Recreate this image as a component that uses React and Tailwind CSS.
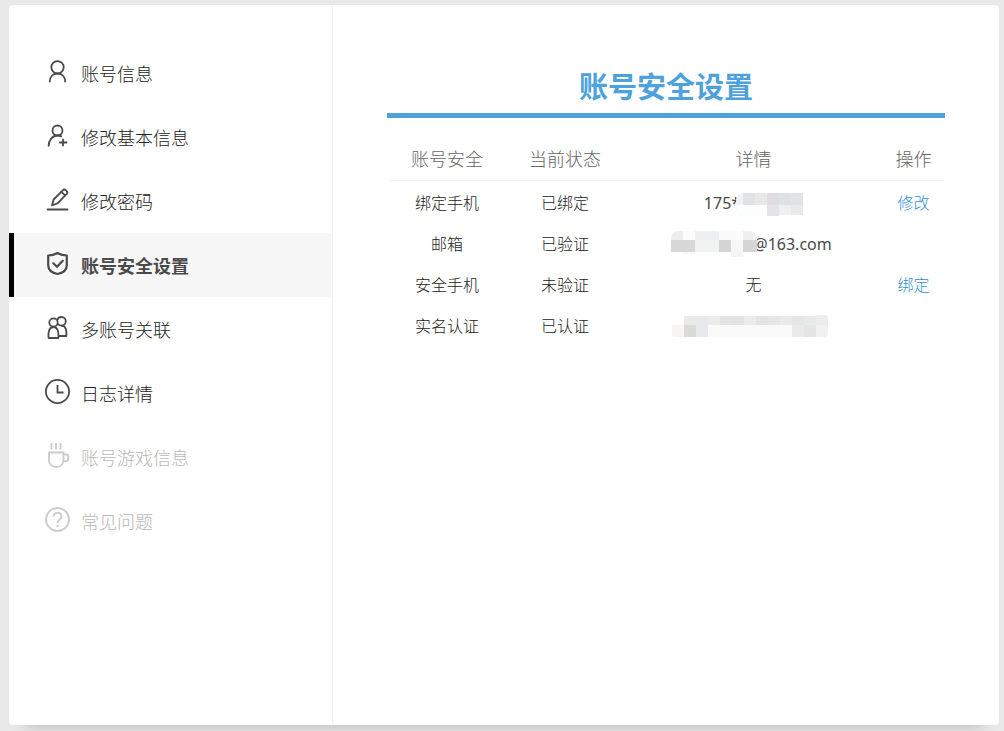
const UserIcon = () => (
  <svg width="26" height="26" viewBox="0 0 26 26" fill="none" stroke="currentColor" strokeWidth="1.8" strokeLinecap="round">
    <circle cx="12.500" cy="8.300" r="6.2" />
    <path d="M4.800 22.500c.2-5 3.500-8 7.700-8s7.500 3 7.700 8" />
  </svg>
);

const UserAddIcon = () => (
  <svg width="26" height="26" viewBox="0 0 26 26" fill="none" stroke="currentColor" strokeWidth="1.8" strokeLinecap="round">
    <circle cx="12.500" cy="7.500" r="5" />
    <path d="M3.600 22.800c.2-5.500 3.500-10.300 9-10.300 1.200 0 2.500.2 3.700.9" />
    <path d="M18 16.500v6M14.800 19.500h6.700" />
  </svg>
);

const EditIcon = () => (
  <svg width="26" height="26" viewBox="0 0 26 26" fill="none" stroke="currentColor" strokeWidth="1.8" strokeLinecap="round" strokeLinejoin="round">
    <path d="M7 18.500l1.600-6L17.800 3.300c.8-.9 1.900-1 2.700-.3l1.200 1.100c.8.8.8 1.800 0 2.700L12.800 16.200z" />
    <path d="M16.300 4.800l3.800 3.600" />
    <path d="M2.500 22.500h20" />
  </svg>
);

const ShieldIcon = () => (
  <svg width="26" height="26" viewBox="0 0 26 26" fill="none" stroke="currentColor" strokeWidth="2.2" strokeLinecap="round" strokeLinejoin="round">
    <path d="M12.500 2c2.800 1.700 5.500 2.500 9.300 2.500v9.500c0 5-4.300 8-9.300 9-5-1-9.300-4-9.300-9V4.500c3.800 0 6.500-.8 9.300-2.500z" />
    <path d="M8.300 12.300l3.700 3.500 5.800-6" />
  </svg>
);

const GroupIcon = () => (
  <svg width="26" height="26" viewBox="0 0 26 26" fill="none" stroke="currentColor" strokeWidth="1.8" strokeLinecap="round" strokeLinejoin="round">
    <circle cx="8.500" cy="7.500" r="4.200" />
    <path d="M3.600 23c-.6-6 .4-11 4.900-11s5.200 5.200 4.900 11z" />
    <path d="M12.300 4.800c.7-1.800 2.300-2.800 4.100-2.800 2.500 0 4.400 1.900 4.400 4.300s-1.900 4.300-4.400 4.300c-1.400 0-2.600-.5-3.500-1.600" />
    <path d="M16.400 10.600c4.800 0 5.300 5.200 5 10.400h-7.700" />
  </svg>
);

const ClockIcon = () => (
  <svg width="26" height="26" viewBox="0 0 26 26" fill="none" stroke="currentColor" strokeWidth="1.8">
    <circle cx="12.500" cy="12.500" r="11.600" />
    <path d="M12.500 6v7.500h6" />
  </svg>
);

const CupIcon = () => (
  <svg width="26" height="26" viewBox="0 0 26 26" fill="none" stroke="currentColor" strokeWidth="1.9" strokeLinejoin="round">
    <path d="M4 9.500h14.500v7.500c0 4.300-3 7-7.200 7s-7.300-2.700-7.300-7z" />
    <path d="M18.500 11.500h3.500c.8 0 1.200.5 1.200 1.200v3.300c0 1.500-.9 2.300-2.200 2.300h-2.500" />
    <path d="M6.500 0v6.500M11 0v6.500M15.500 0v6.500" />
  </svg>
);

const HelpIcon = () => (
  <svg width="26" height="26" viewBox="0 0 26 26" fill="none" stroke="currentColor" strokeWidth="1.9">
    <circle cx="12.500" cy="12.500" r="11.500" />
    <path d="M8.500 9.800c0-2.500 1.700-4 4-4s4 1.500 4 3.700c0 3.200-4 3-4 6.500" />
    <path d="M12.500 17.700v2.200" />
  </svg>
);

const menu = [
  { label: "账号信息", icon: UserIcon },
  { label: "修改基本信息", icon: UserAddIcon },
  { label: "修改密码", icon: EditIcon },
  { label: "账号安全设置", icon: ShieldIcon, active: true },
  { label: "多账号关联", icon: GroupIcon },
  { label: "日志详情", icon: ClockIcon },
  { label: "账号游戏信息", icon: CupIcon, disabled: true },
  { label: "常见问题", icon: HelpIcon, disabled: true },
];

const Sidebar = () => (
  <nav className="w-81 shrink-0 border-r border-[#f2f2f2] pt-9">
    {menu.map(({ label, icon: Icon, active, disabled }) => (
      <button
        key={label}
        type="button"
        disabled={disabled}
        className={`flex h-16 w-full items-center gap-2.5 border-l-5 pl-[31px] text-lg ${
          active
            ? "border-black bg-[#f7f7f7] font-bold text-[#4a4a4a]"
            : disabled
              ? "border-transparent font-light text-[#b8b8b8]"
              : "border-transparent font-light text-[#222222]"
        }`}
      >
        <span className={disabled ? "pb-0.5 text-[#cccccc]" : "pb-0.5 text-[#4a4a4a]"}>
          <Icon />
        </span>
        <span className="pt-0.5">{label}</span>
      </button>
    ))}
  </nav>
);

// Pixelated cover for private values: [x, y, width, height, colour]
const Mosaic = ({ width, height, blocks, className }) => (
  <svg width={width} height={height} className={className} aria-hidden="true">
    {blocks.map(([x, y, w, h, fill]) => (
      <rect key={`${x}-${y}`} x={x} y={y} width={w} height={h} fill={fill} shapeRendering="crispEdges" />
    ))}
  </svg>
);

const phoneBlocks = [
  [0, 0, 7, 23, "#f1f2f4"],
  [7, 0, 12, 12, "#e2e2e4"],
  [19, 0, 12, 12, "#e9e8e8"],
  [31, 0, 12, 12, "#dedcde"],
  [43, 0, 12, 12, "#dfe0e5"],
  [55, 0, 12, 12, "#e2e2e4"],
  [0, 12, 19, 11, "#fcfdff"],
  [19, 12, 12, 11, "#fdfdfd"],
  [31, 12, 12, 11, "#e4e3e5"],
  [43, 12, 12, 10, "#eeefef"],
  [55, 12, 12, 10, "#e9e9ea"],
];

const emailBlocks = [
  [0, 0, 12, 9, "#ededed"],
  [12, 0, 12, 9, "#fbfbfb"],
  [24, 0, 24, 9, "#eeeff1"],
  [48, 0, 24, 9, "#fbfbfb"],
  [72, 0, 14, 9, "#efefef"],
  [0, 9, 24, 12, "#d7d7d7"],
  [24, 9, 24, 12, "#f1f2f2"],
  [48, 9, 12, 12, "#d4d4d4"],
  [60, 9, 12, 12, "#f7f7f7"],
  [72, 9, 14, 12, "#d6d6d6"],
  [12, 21, 12, 3, "#fafafa"],
  [60, 21, 12, 5, "#f5f5f5"],
];

const idBlocks = [
  [0, 0, 12, 10, "#fefefe"],
  [12, 1, 24, 9, "#e9e9ea"],
  [36, 1, 12, 9, "#ebebea"],
  [48, 1, 12, 9, "#e4e4e7"],
  [60, 1, 12, 9, "#e3e3e4"],
  [72, 1, 12, 9, "#ebebea"],
  [84, 1, 12, 9, "#e3e4e7"],
  [96, 1, 12, 9, "#e6e6e4"],
  [108, 1, 12, 9, "#eaeaea"],
  [120, 1, 12, 9, "#e5e5e6"],
  [132, 1, 12, 9, "#e7eaea"],
  [144, 0, 12, 10, "#ededee"],
  [0, 10, 12, 12, "#f6f5f3"],
  [12, 10, 12, 12, "#dadad8"],
  [24, 10, 12, 12, "#e8e9ec"],
  [36, 10, 84, 12, "#fafafa"],
  [120, 10, 12, 12, "#eaeaea"],
  [132, 10, 12, 12, "#e4e4e4"],
  [144, 10, 12, 12, "#f1f1f1"],
];

const rows = [
  {
    name: "绑定手机",
    status: "已绑定",
    detail: (
      <>
        <span className="font-normal text-[#4a4a4a]">175*</span>
        <Mosaic width={67} height={23} blocks={phoneBlocks} className="z-10 mt-1 -ml-1 rounded-l-lg" />
      </>
    ),
    action: "修改",
  },
  {
    name: "邮箱",
    status: "已验证",
    detail: (
      <>
        <Mosaic width={86} height={26} blocks={emailBlocks} className="z-10 -mr-1 rounded-t-lg" />
        <span className="pr-1 font-normal text-[#4a4a4a]">@163.com</span>
      </>
    ),
  },
  { name: "安全手机", status: "未验证", detail: "无", action: "绑定" },
  {
    name: "实名认证",
    status: "已认证",
    detail: <Mosaic width={156} height={22} blocks={idBlocks} className="mr-2 rounded" />,
  },
];

const SecurityTable = () => (
  <table className="mt-5 w-full table-fixed border-separate border-spacing-0.5 text-center font-light">
    <thead>
      <tr className="h-[41px] text-lg text-[#666666]">
        <th className="w-[116px] border-b border-[#f2f2f2] p-0 pb-0.5 font-light">账号安全</th>
        <th className="w-[116px] border-b border-[#f2f2f2] p-0 pb-0.5 font-light">当前状态</th>
        <th className="border-b border-[#f2f2f2] p-0 pb-0.5 font-light">详情</th>
        <th className="w-[59px] border-b border-[#f2f2f2] p-0 pb-0.5 font-light">操作</th>
      </tr>
    </thead>
    <tbody>
      {rows.map((row) => (
        <tr key={row.name} className="h-[39px] text-[#222222]">
          <td className="p-0">{row.name}</td>
          <td className="p-0">{row.status}</td>
          <td className="p-0">
            <div className="flex h-[39px] items-center justify-center">{row.detail}</div>
          </td>
          <td className="p-0">
            {row.action && (
              <a href="#" className="text-[#2f8fd8]">
                {row.action}
              </a>
            )}
          </td>
        </tr>
      ))}
    </tbody>
  </table>
);

const App = () => (
  <div className="min-h-screen bg-[#e9e9e9] pt-[5px] pr-[5px] pb-1.5 pl-[9px] font-['Noto_Sans','Noto_Sans_CJK_SC',sans-serif]">
    <div className="flex min-h-[720px] rounded bg-white shadow-[0_16px_16px_-16px_rgba(0,0,0,0.25)]">
      <Sidebar />
      <main className="min-w-0 flex-1 px-[54px] pt-14">
        <h1 className="border-b-5 border-[#4ea2dc] text-center text-[29px] leading-[52px] font-bold text-[#4ea2dc]">
          账号安全设置
        </h1>
        <SecurityTable />
      </main>
    </div>
  </div>
);

export default App;
